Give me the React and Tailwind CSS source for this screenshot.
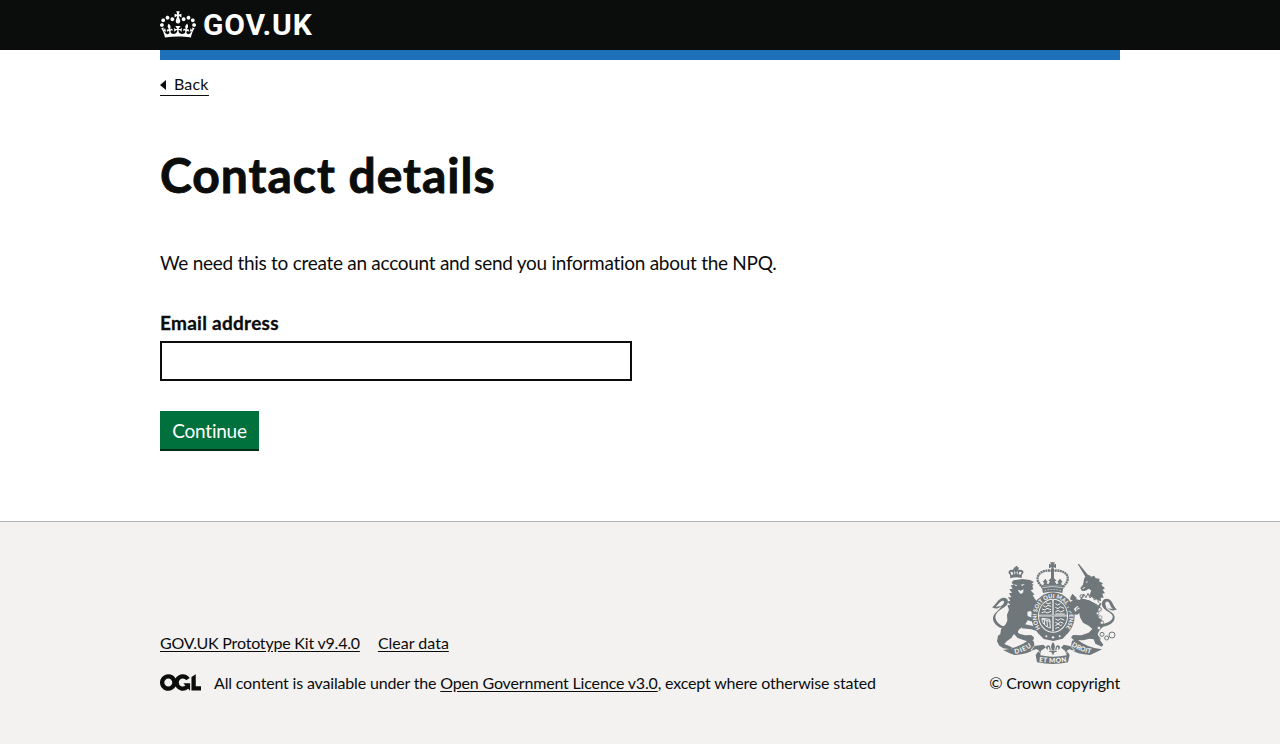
function Crown() {
  return (
    <svg className="block h-[27px] w-9 shrink-0" viewBox="0 0 132 97" fill="currentColor" aria-hidden="true">
      <path
        fillRule="evenodd"
        d="M25 30.2c3.5 1.5 7.7-.2 9.1-3.7 1.5-3.6-.2-7.8-3.9-9.2-3.6-1.4-7.6.3-9.1 3.9-1.4 3.5.3 7.5 3.9 9zM9 39.5c3.6 1.5 7.8-.2 9.2-3.7 1.5-3.6-.2-7.8-3.9-9.1-3.6-1.5-7.6.2-9.1 3.8-1.4 3.5.3 7.5 3.8 9zM4.4 57.2c3.5 1.5 7.7-.2 9.1-3.8 1.5-3.6-.2-7.7-3.9-9.1-3.5-1.5-7.6.3-9.1 3.8-1.4 3.5.3 7.6 3.9 9.1zm38.3-21.4c3.5 1.5 7.7-.2 9.1-3.8 1.5-3.6-.2-7.7-3.9-9.1-3.6-1.5-7.6.3-9.1 3.8-1.3 3.6.4 7.7 3.9 9.1zm64.4-5.6c-3.6 1.5-7.8-.2-9.1-3.7-1.5-3.6.2-7.8 3.8-9.2 3.6-1.4 7.7.3 9.2 3.9 1.3 3.5-.4 7.5-3.9 9zm15.9 9.3c-3.6 1.5-7.7-.2-9.1-3.7-1.5-3.6.2-7.8 3.7-9.1 3.6-1.5 7.7.2 9.2 3.8 1.5 3.5-.3 7.5-3.8 9zm4.7 17.7c-3.6 1.5-7.8-.2-9.2-3.8-1.5-3.6.2-7.7 3.9-9.1 3.6-1.5 7.7.3 9.2 3.8 1.3 3.5-.4 7.6-3.9 9.1zM89.3 35.8c-3.6 1.5-7.8-.2-9.2-3.8-1.4-3.6.2-7.7 3.9-9.1 3.6-1.5 7.7.3 9.2 3.8 1.4 3.6-.3 7.7-3.9 9.1zM69.7 17.7l8.9 4.7V9.3l-8.9 2.8c-.2-.3-.5-.6-.9-.9L72.4 0H59.6l3.5 11.2c-.3.3-.6.5-.9.9l-8.8-2.8v13.1l8.8-4.7c.3.3.6.7.9.9l-5 15.4v.1c-.2.8-.4 1.6-.4 2.4 0 4.1 3.1 7.5 7 8.1h.2c.3 0 .7.1 1 .1.4 0 .7 0 1-.1h.2c4-.6 7.1-4.1 7.1-8.1 0-.8-.1-1.7-.4-2.4V34l-5.1-15.4c.4-.2.7-.6 1-.9zM66 92.8c16.9 0 32.8 1.1 47.1 3.2 4-16.9 8.9-26.7 14-33.5l-9.6-3.4c1 4.9 1.1 7.2 0 10.2-1.5-1.4-3-4.3-4.2-8.7L108.6 76c2.8-2 5-3.2 7.5-3.3-4.4 9.4-10 11.9-13.6 11.2-4.3-.8-6.3-4.6-5.6-7.9 1-4.7 5.7-5.9 8-.5 4.3-8.7-3-11.4-7.6-8.8 7.1-7.2 7.9-13.5 2.1-21.1-8 6.1-8.1 12.3-4.5 20.8-4.7-5.4-12.1-2.5-9.5 6.2 3.4-5.2 7.9-2 7.2 3.1-.6 4.3-6.4 7.8-13.5 7.2-10.3-.9-10.9-8-11.2-13.8 2.5-.5 7.1 1.8 11 7.3L80.2 60c-4.1 4.4-8 5.3-12.3 5.4 1.4-4.4 8-11.6 8-11.6H55.5s6.4 7.2 7.9 11.6c-4.2-.1-8-1-12.3-5.4l1.4 16.4c3.9-5.5 8.5-7.7 10.9-7.3-.3 5.8-.9 12.8-11.1 13.8-7.2.6-12.9-2.9-13.5-7.2-.7-5 3.8-8.3 7.1-3.1 2.7-8.7-4.6-11.6-9.4-6.2 3.7-8.5 3.6-14.7-4.6-20.8-5.8 7.6-5 13.9 2.2 21.1-4.7-2.6-11.9.1-7.7 8.8 2.3-5.5 7.1-4.2 8.1.5.7 3.3-1.3 7.1-5.7 7.9-3.5.7-9-1.8-13.5-11.2 2.5.1 4.7 1.3 7.5 3.3l-4.7-15.4c-1.2 4.4-2.7 7.2-4.3 8.7-1.1-3-.9-5.3 0-10.2l-9.5 3.4c5 6.9 9.9 16.7 14 33.5 14.8-2.1 30.8-3.2 47.7-3.2z"
      />
    </svg>
  );
}

function OglLogo() {
  return (
    <svg className="mb-[2px] h-[17px] w-[41px] shrink-0" viewBox="0 0 483.2 195.7" fill="currentColor" aria-hidden="true">
      <path d="M421.5 142.8V.1l-50.7 32.3v161.1h112.4v-50.7zm-122.3-9.6A47.12 47.12 0 0 1 221 97.8c0-26 21.1-47.1 47.1-47.1 16.7 0 31.4 8.7 39.7 21.8l42.7-27.2A97.63 97.63 0 0 0 268.1 0c-36.5 0-68.3 20.1-85.1 49.7A98 98 0 0 0 97.8 0C43.9 0 0 43.9 0 97.8s43.9 97.8 97.8 97.8c36.5 0 68.3-20.1 85.1-49.7a97.76 97.76 0 0 0 149.6 25.4l19.4 22.2h3v-87.8h-80l24.3 27.5zM97.8 145c-26 0-47.1-21.1-47.1-47.1s21.1-47.1 47.1-47.1 47.1 21.1 47.1 47.1S123.8 145 97.8 145" />
    </svg>
  );
}

const INK = "#6f777b";
const PAPER = "#f3f2f1";

function Crest() {
  return (
    <svg className="block h-[102px] w-[125px]" viewBox="12 12 375 306" fill={INK} aria-hidden="true">
      {/* lion's tail */}
      <path d="M60 205C44 208 30 198 24 185C17 170 32 158 45 150C60 142 63 131 57 123C48 115 35 121 27 132C21 139 17 145 12 148C20 154 34 152 40 143C36 157 13 165 15 184C18 202 40 216 62 213Z" />
      <path d="M39 144C50 137 51 127 43 128C35 130 31 140 23 146Z" fill={PAPER} />
      {/* lion */}
      <path d="M76 67L103 63L126 66L138 72L131 77L137 80L133 84L136 94L128 97L140 110L134 111L140 122L149 132L143 136L152 144L144 148L153 158L145 162L149 172L136 169L128 159L118 161L119 184C117 198 105 205 98 211C91 216 86 222 94 227L111 232L129 231L138 238L136 247L126 252L108 247L89 240L78 228L70 240L57 249L49 258L64 264L74 269L66 274L46 271L34 263L27 250L30 233L37 228L39 214L53 199L58 188L57 170L63 155L58 142L67 140L57 131L67 128L60 118L70 118L63 106L72 104L64 94L74 92L68 82L77 81L71 74Z" />
      <path d="M78 79L88 82L84 85ZM98 80L110 78L103 84ZM89 95L98 98L107 94L105 104L98 108L93 102Z" fill={PAPER} />
      <path d="M116 173L146 184L162 181L153 190L138 192L113 185Z" />
      <path d="M108 198L139 205L151 213L146 219L130 214L100 211Z" />
      {/* lion's crown */}
      <path d="M67 61L66 50C56 44 64 32 75 36C78 25 90 28 92 36C104 32 112 42 102 50L101 60Q84 55 67 61Z" />
      <path d="M67 42L73 41L76 49L71 52ZM94 41L101 42L98 50L92 49ZM79 38L83 44L79 50ZM88 38L85 44L90 50Z" fill={PAPER} />
      <path d="M79 28h4v-4h5v4h4v5h-4v4h-5v-4h-4z" />
      {/* imperial crown */}
      <path d="M186 13h15l-4 7l7-3v14l-8-4l3 12h-11l3-12l-8 4V17l7 3z" />
      <path d="M193 39C177 34 146 41 149 65C150 75 158 80 164 90M193 39C211 34 243 41 239 65C237 76 229 80 224 90" fill="none" stroke={INK} strokeWidth="7" strokeDasharray="6 1.5" />
      <path d="M189 38h9v42h-9z" />
      <path d="M160 82L227 82L223 105Q194 98 165 105Z" />
      <path d="M163 89Q193 82 224 89" fill="none" stroke={PAPER} strokeWidth="2" />
      <path d="M165 82L169 74L164 72L172 62L179 72L175 75L181 79L186 70L181 68L193 56L206 68L200 70L206 79L212 75L208 71L216 62L224 72L219 75L222 82Z" />
      <path d="M170 98Q194 91 219 98" fill="none" stroke={PAPER} strokeWidth="2" strokeDasharray="5 4" />
      {/* garter and shield */}
      <ellipse cx="195" cy="174" rx="65" ry="71" />
      <ellipse cx="195" cy="173" rx="45" ry="51" fill={PAPER} />
      <ellipse cx="195" cy="173" rx="42" ry="48" />
      <path d="M195 126V220M154 173H236" stroke={PAPER} strokeWidth="5" />
      <path d="M195 128V217M156 173H234" stroke={INK} strokeWidth="1.5" />
      <g fill="none" stroke={PAPER} strokeWidth="3">
        <path d="M166 143l7 4l7-5l9 3M162 153l9 3l6-5l12 4M161 164l10-3l6 4l12-5M174 134l6 4l9-4" />
        <path d="M202 137l7 4l8-4M202 148l8 4l7-6l11 5M202 162l8-5l8 5l11-5M202 168h28" />
        <path d="M162 183l26 8M162 181C160 194 173 207 187 210L185 184ZM169 186l1 14M177 188l1 18" />
        <path d="M202 183l8 4l8-5l11 4M202 193l8 4l8-5l8 4M202 203l8-5l8 5l4-3M202 212l8-4l4 2" />
      </g>
      <path id="garter-arc" d="M158 211A49 55 0 1 1 232 211" fill="none" />
      <text fill={PAPER} fontFamily="Lato, sans-serif" fontWeight="900" fontSize="17">
        <textPath href="#garter-arc" textLength="238" lengthAdjust="spacing">HONI SOIT QUI MAL Y PENSE</textPath>
      </text>
      <path d="M158 213L174 226L217 226L232 213L240 224L224 242L196 249L167 243L151 226Z" />
      <circle cx="175" cy="235" r="3" fill={PAPER} />
      <circle cx="195" cy="238" r="3.5" fill={PAPER} />
      <circle cx="215" cy="235" r="3" fill={PAPER} />
      {/* unicorn */}
      <path d="M269 18L273 18L302 53L294 59Z" />
      <path d="M289 59L303 50L309 56L319 53L323 61L335 62L333 70L345 76L340 81L351 91L344 95L351 106L343 107L347 119L338 119L339 130L329 126L303 114L310 98L303 92L290 99L281 98L277 90L285 80Z" />
      <path d="M293 72l8-2l-5 5zM282 91l12-5l-8 7z" fill={PAPER} />
      <path d="M285 110L301 119L328 132L340 136L336 147L330 157L332 177L346 190L347 205L335 216L329 228L336 246L346 260L341 266L322 257L317 244L304 242L286 247L257 246L249 238L255 231L280 232L302 224L313 213L302 203L285 194L276 178L273 162L278 151L268 144L256 154L263 164L258 170L246 158L241 145L247 132L262 123L276 126Z" />
      <path d="M266 119L253 107L248 116L246 124L262 132ZM246 151L256 148L262 161L274 151L282 158L268 170L253 169Z" />
      <path d="M282 117Q305 119 333 139" fill="none" stroke={PAPER} strokeWidth="10" />
      <g fill="none" stroke={INK} strokeWidth="3">
        <path d="M279 124L287 108L294 119L300 106L306 120L314 111L319 126L329 119L331 134" />
        <path d="M279 123Q305 125 329 142" />
        <circle cx="281" cy="115" r="5" />
        <circle cx="272" cy="154" r="6" />
        <circle cx="334" cy="154" r="6" />
        <circle cx="319" cy="229" r="6" />
        <circle cx="330" cy="242" r="6" />
        <circle cx="342" cy="229" r="6" />
        <circle cx="356" cy="240" r="6" />
        <circle cx="372" cy="231" r="9" />
      </g>
      <g fill={PAPER} stroke={INK} strokeWidth="2">
        <circle cx="329" cy="166" r="4" />
        <circle cx="337" cy="178" r="5" />
        <circle cx="342" cy="194" r="5" />
        <circle cx="333" cy="210" r="5" />
      </g>
      {/* unicorn's tail */}
      <path d="M337 199C358 197 377 187 374 174C371 164 349 159 343 145C337 129 351 117 363 124C376 131 376 149 387 154C376 161 361 157 354 143C351 157 380 161 380 178C381 195 359 207 337 206Z" />
      <path d="M353 143C349 133 356 127 362 133C367 139 366 147 375 152C365 154 357 150 353 143Z" fill={PAPER} />
      {/* motto ribbon */}
      <path d="M45 276Q92 270 126 244L138 251L139 264L166 260L174 268L159 278L157 292Q195 300 236 292L231 278L219 269L227 260L249 265L252 248L267 244Q297 270 342 274L324 283L306 291Q267 289 245 273L237 278L245 291L240 313Q195 323 147 313L143 291L153 277L144 273Q113 290 80 291L65 286Z" />
      <path d="M139 264L129 276L152 280L158 285M249 265L260 277L238 280L235 286" fill="none" stroke={PAPER} strokeWidth="2.5" />
      <g fill={PAPER} fontFamily="Lato, sans-serif" fontWeight="900" fontSize="20">
        <path id="motto-left" d="M81 288Q111 282 136 263" fill="none" />
        <path id="motto-centre" d="M153 311Q195 317 237 311" fill="none" />
        <path id="motto-right" d="M250 263Q280 284 318 288" fill="none" />
        <text><textPath href="#motto-left" textLength="55">DIEU</textPath></text>
        <text><textPath href="#motto-centre" textLength="83">ET MON</textPath></text>
        <text><textPath href="#motto-right" textLength="63">DROIT</textPath></text>
      </g>
      {/* fleur-de-lis */}
      <path d="M195 252C189 260 187 267 192 275H184C183 270 185 268 181 267C176 270 181 273 179 276C171 272 174 262 181 262C188 264 186 271 190 277H200C204 271 202 264 209 262C217 262 219 272 211 276C209 273 214 270 209 267C205 268 207 270 206 275H198C203 267 201 260 195 252ZM184 278H206V282H200L195 292L190 282H184Z" />
    </svg>
  );
}

export default function App() {
  return (
    <div className="flex min-h-screen flex-col bg-white font-['Lato','Noto_Sans',sans-serif] text-[#0b0c0c]">
      <header className="h-[50px] bg-[#0b0c0c] text-white">
        <a href="#" className="mx-auto flex w-[960px] pt-[10px]">
          <span className="block pt-px"><Crown /></span>
          <span className="ml-[7px] font-['Roboto',sans-serif] text-[30px] leading-[30px] font-bold tracking-[0.8px]">GOV.UK</span>
        </a>
      </header>
      <div className="mx-auto w-[960px] grow">
        <div className="h-[10px] bg-[#1d70b8]" />
        <a href="#" className="mt-[15px] flex h-[21px] w-[49px] items-center border-b border-[#0b0c0c] text-[16px] leading-5 tracking-[0.15px]">
          <svg className="mr-2 h-[10px] w-[6px] shrink-0" viewBox="0 0 6 10" fill="currentColor" aria-hidden="true">
            <path d="M6 0v10L0 5z" />
          </svg>
          <span className="pb-[2px]">Back</span>
        </a>
        <main className="pt-[54px]">
          <h1 className="text-[48px] leading-[50px] font-bold tracking-[1px] [-webkit-text-stroke:0.9px_#0b0c0c]">Contact details</h1>
          <p className="mt-[50px] text-[19px] leading-[25px] tracking-[-0.28px]">
            We need this to create an account and send you information about the NPQ.
          </p>
          <label htmlFor="email" className="mt-[36px] block text-[19px] leading-[24px] font-bold tracking-[0.27px] [-webkit-text-stroke:0.3px_#0b0c0c]">
            Email address
          </label>
          <input id="email" type="email" className="mt-[6px] block h-10 w-[472px] border-2 border-[#0b0c0c] px-1 text-[19px]" />
          <button type="button" className="mt-[30px] mb-[70px] block h-10 w-[99px] bg-[#00703c] pb-[1px] text-[19px] leading-[19px] tracking-[-0.25px] text-white shadow-[inset_0_-2px_0_#002d18]">
            Continue
          </button>
        </main>
      </div>
      <footer className="h-[223px] border-t border-[#b1b4b6] bg-[#f3f2f1] text-[16px] leading-5">
        <div className="mx-auto flex w-[960px] items-end justify-between pt-10">
          <div>
            <div className="flex gap-[18px]">
              <a href="#" className="tracking-[-0.2px] underline underline-offset-[2px]">GOV.UK Prototype Kit v9.4.0</a>
              <a href="#" className="underline underline-offset-[2px]">Clear data</a>
            </div>
            <div className="mt-5 flex items-center">
              <OglLogo />
              <p className="ml-[13px] tracking-[-0.17px]">
                All content is available under the{" "}
                <a href="#" className="underline underline-offset-[2px]">Open Government Licence v3.0</a>, except where otherwise stated
              </p>
            </div>
          </div>
          <div className="flex flex-col items-end">
            <span className="mr-[3px]"><Crest /></span>
            <span className="mt-[9px] tracking-[-0.2px]">© Crown copyright</span>
          </div>
        </div>
      </footer>
    </div>
  );
}
